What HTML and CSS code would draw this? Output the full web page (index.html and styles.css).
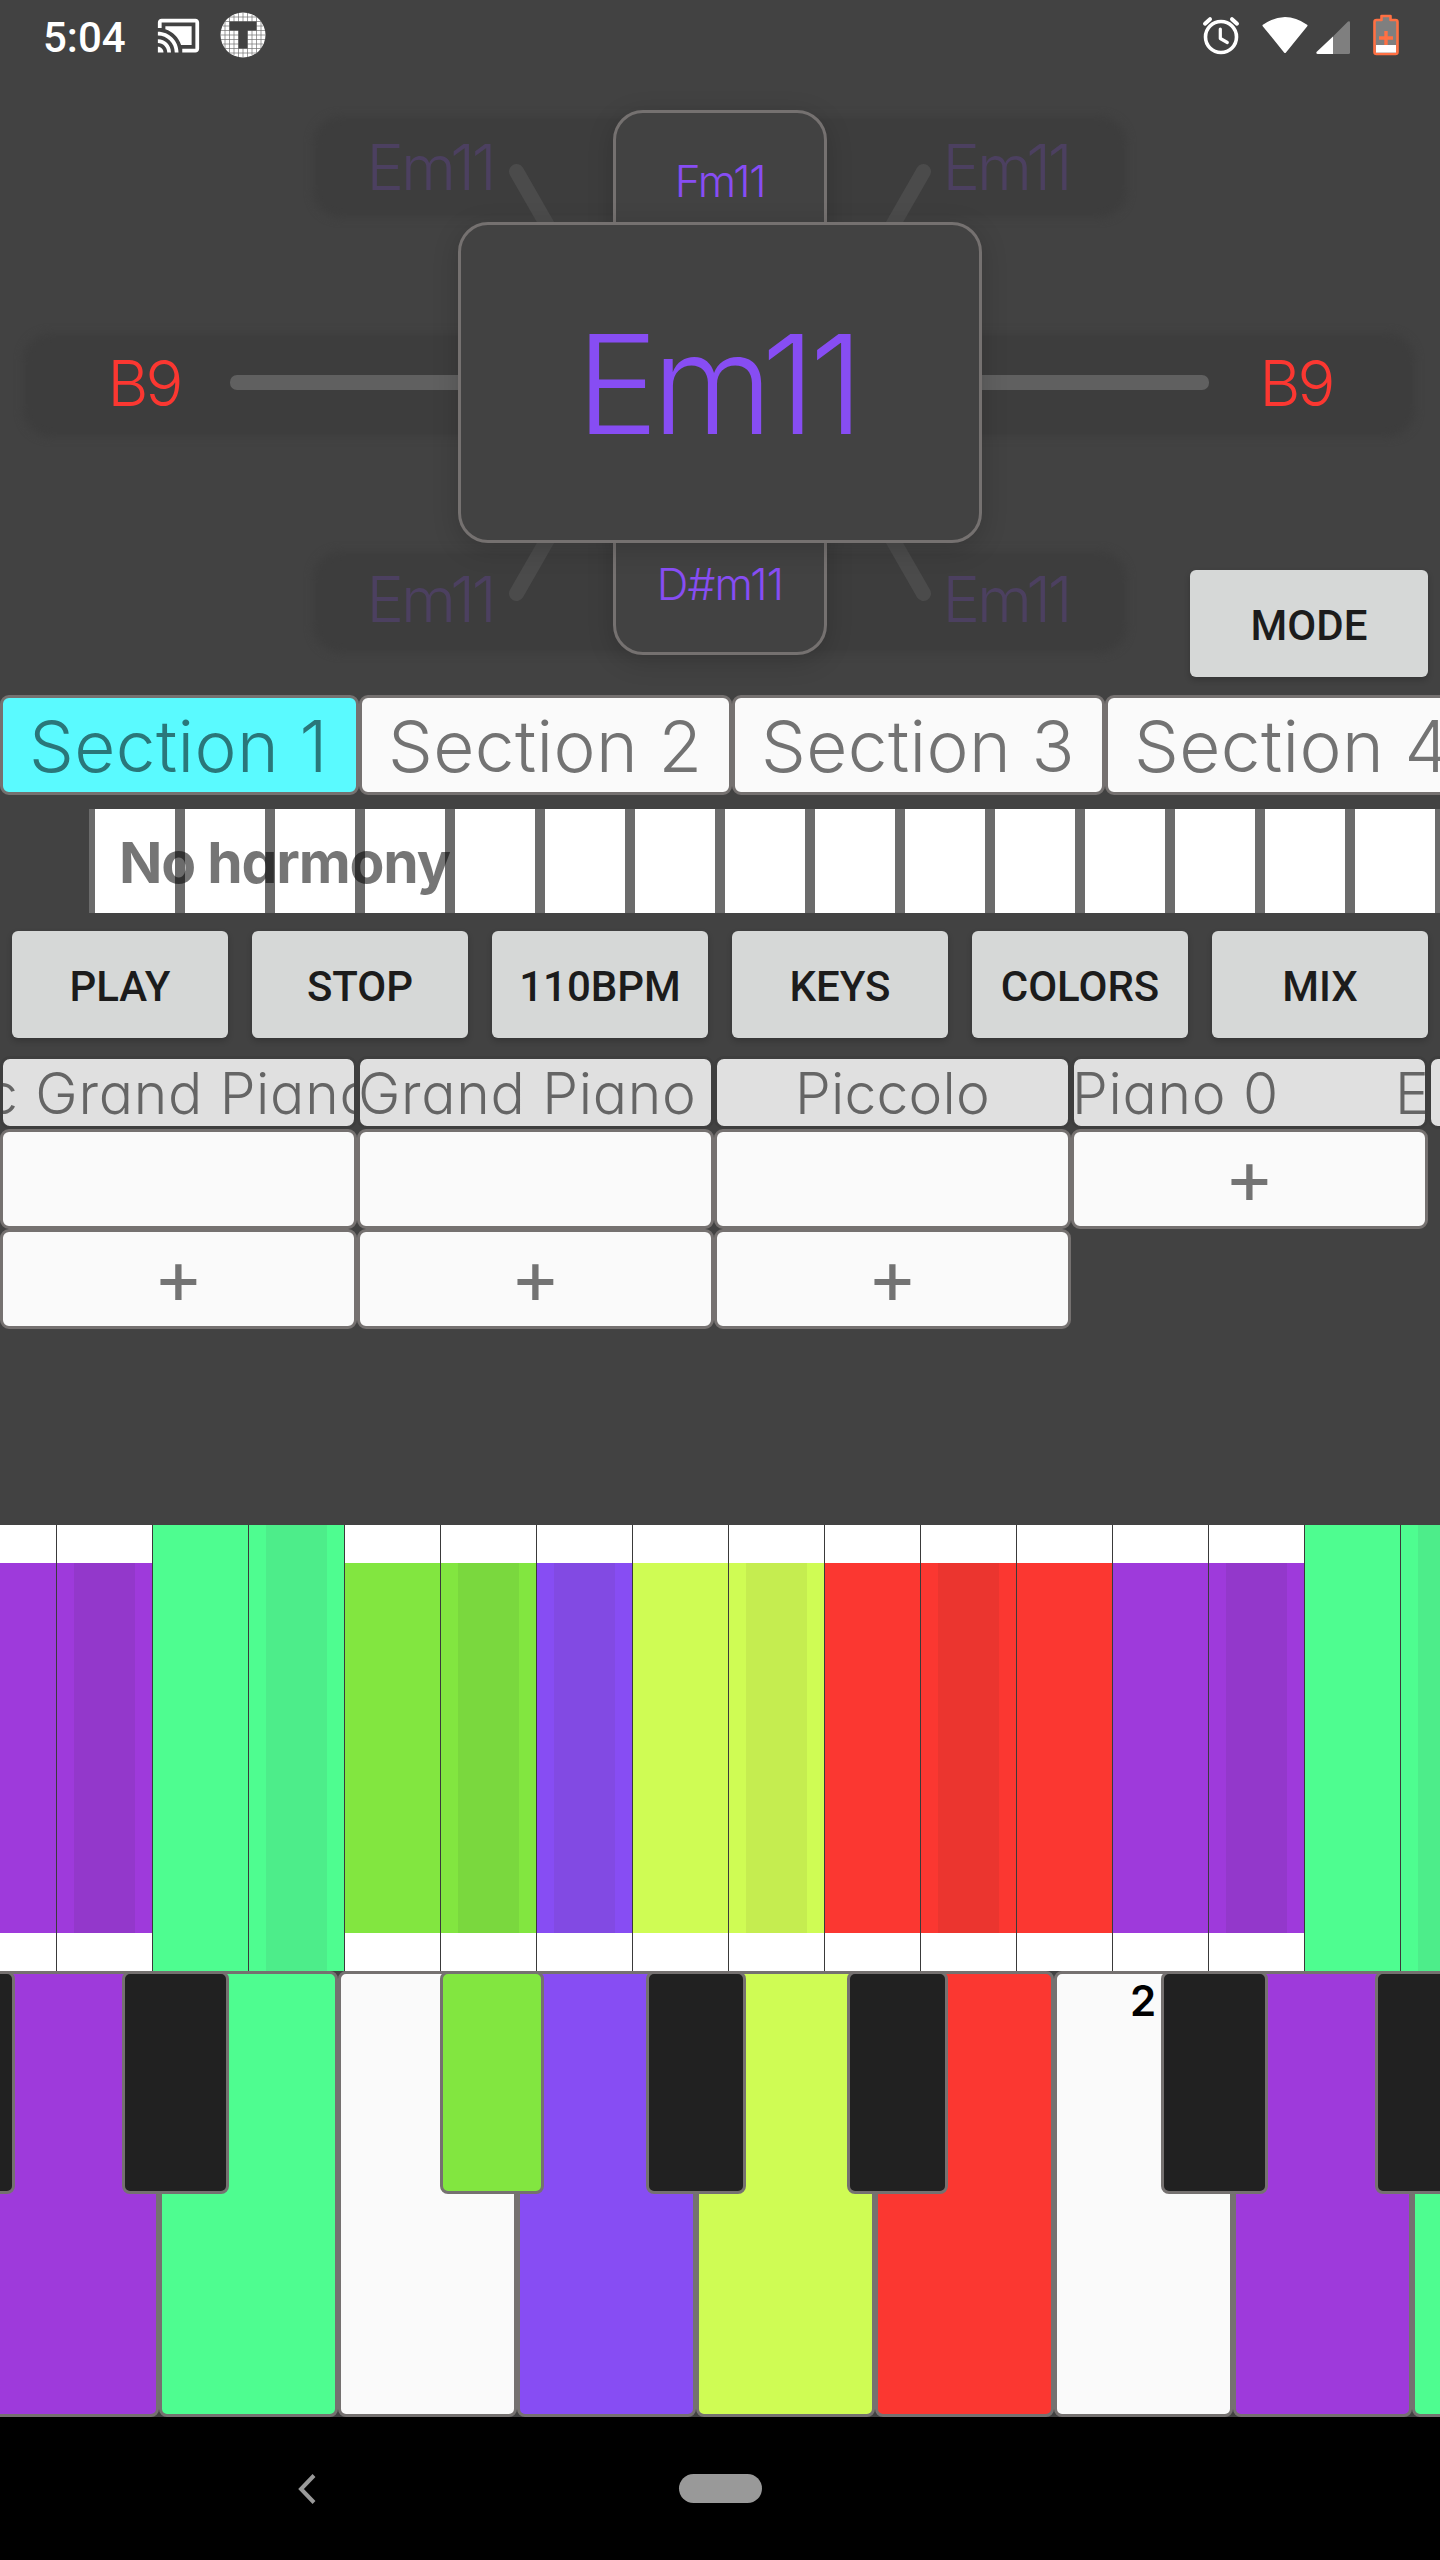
FILE: index.html
```html
<!DOCTYPE html>
<html lang="en">
<head>
<meta charset="utf-8">
<title>Harmony keyboard</title>
<link rel="stylesheet" href="styles.css">
</head>
<body>
<div class="app">
  <header class="status">
    <span class="clock">5:04</span>
    <svg class="ic-cast" width="45" height="45" viewBox="0 0 24 24"><path fill="#fff" d="M1 18v3h3c0-1.660-1.340-3-3-3zm0-4v2c2.760 0 5 2.240 5 5h2c0-3.870-3.130-7-7-7zm18-7H5v1.630c3.960 1.280 7.090 4.410 8.370 8.370H19V7zM1 10v2c4.970 0 9 4.030 9 9h2c0-6.080-4.930-11-11-11zm20-7H3c-1.100 0-2 .9-2 2v3h2V5h18v14h-7v2h7c1.100 0 2-.9 2-2V5c0-1.100-.9-2-2-2z"/></svg>
    <svg class="ic-t" width="46" height="46" viewBox="0 0 46 46">
      <circle cx="23" cy="23" r="22.500" fill="#fff"/>
      <path stroke="#424242" stroke-width=".7" opacity=".75" d="M5 10v26M9.500 5v36M14 3v40M18.500 1v44M23 .5v45M27.500 1v44M32 3v40M36.500 5v36M41 10v26M10 5h26M5 9.500h36M3 14h40M1 18.500h44M.5 23h45M1 27.500h44M3 32h40M5 36.500h36M10 41h26"/>
      <path fill="#424242" d="M9.500 9.500h27v9h-9v18h-9v-18h-9z"/>
    </svg>
    <span class="grow"></span>
    <svg class="ic-alarm" width="40" height="40" viewBox="0 0 40 40" fill="none" stroke="#fff" stroke-linecap="round">
      <circle cx="20" cy="22" r="15.500" stroke-width="3.600"/>
      <path stroke-width="3.200" stroke-linejoin="round" d="M19.300 14v9.500l7 4"/>
      <path stroke-width="4" d="M4 8.700l5-4.500M31 4.200l5 4.500"/>
    </svg>
    <svg class="ic-wifi" width="46" height="38" viewBox="0 0 46 38"><path fill="#fff" stroke="#fff" stroke-width="2" stroke-linejoin="round" d="M1.500 9.500Q23-5.500 44.500 9.500L23 36z"/></svg>
    <svg class="ic-signal" width="36" height="36" viewBox="0 0 36 36"><path fill="#7f7f7f" d="M18 17.500L33 2.500q2-1 2 1V33.500q0 1.500-1.500 1.500H18z"/><path fill="#fff" d="M18 17.500V35H2.500q-2-.5-1-2z"/></svg>
    <svg class="ic-battery" width="26" height="42" viewBox="0 0 26 42"><path fill="#7f7f7f" stroke="#ff7043" stroke-width="2.600" stroke-linejoin="round" d="M8.500 2h9v4h5q2 0 2 2v30q0 2-2 2h-19q-2 0-2-2V8q0-2 2-2h5z"/><path fill="#fff" d="M3 31h20v7.600H3z"/><path stroke="#ff7043" stroke-width="3.400" d="M13 17v14M6 24h14"/></svg>
  </header>

  <section class="stage">
    <div class="band band-top"></div>
    <div class="band band-mid"></div>
    <div class="band band-bottom"></div>
    <svg class="rays" width="1440" height="623" viewBox="0 72 1440 623">
      <g stroke="#4b4b4b" stroke-width="15" stroke-linecap="round"><path d="M516.500 171.500l43 75M923.500 171.500l-43 75M516.500 593.500l43-75M923.500 593.500l-43-75"/></g>
      <rect x="230" y="375" width="979" height="15" rx="7" fill="#606060"/>
    </svg>
    <div class="step-card"></div>
    <div class="main-card"></div>
    <span class="chord huge">Em11</span>
    <span class="chord small up">Fm11</span>
    <span class="chord small down">D#m11</span>
    <span class="chord side red left">B9</span>
    <span class="chord side red right">B9</span>
    <span class="chord side dim tl">Em11</span>
    <span class="chord side dim tr">Em11</span>
    <span class="chord side dim bl">Em11</span>
    <span class="chord side dim br">Em11</span>
    <button class="btn mode">MODE</button>
  </section>

  <nav class="sections">
    <div class="section active">Section 1</div>
    <div class="section">Section 2</div>
    <div class="section">Section 3</div>
    <div class="section">Section 4</div>
  </nav>

  <div class="harmony">
    <i></i><i></i><i></i><i></i><i></i><i></i><i></i><i></i><i></i><i></i><i></i><i></i><i></i><i></i><i></i>
    <span class="harmony-label">No harmony</span>
  </div>

  <div class="controls">
    <button class="btn">PLAY</button>
    <button class="btn">STOP</button>
    <button class="btn">110BPM</button>
    <button class="btn">KEYS</button>
    <button class="btn">COLORS</button>
    <button class="btn">MIX</button>
  </div>

  <div class="parts">
    <div class="part"><div class="part-name"><span class="scrolled">c Grand Piano</span></div><div class="cell"></div><div class="cell plus">+</div></div>
    <div class="part"><div class="part-name"><span class="flush">Grand Piano</span></div><div class="cell"></div><div class="cell plus">+</div></div>
    <div class="part"><div class="part-name centered"><span>Piccolo</span></div><div class="cell"></div><div class="cell plus">+</div></div>
    <div class="part"><div class="part-name marquee"><span>Piano 0</span><span>E</span></div><div class="cell plus">+</div></div>
    <div class="part"><div class="part-name"></div></div>
  </div>

  <div class="colors">
    <div class="tone purple"></div><div class="tone purple dark"></div>
    <div class="tone green root"></div><div class="tone green root dark"></div>
    <div class="tone leaf"></div><div class="tone leaf dark"></div>
    <div class="tone violet dark"></div>
    <div class="tone lime"></div><div class="tone lime dark"></div>
    <div class="tone red"></div><div class="tone red dark"></div><div class="tone red"></div>
    <div class="tone purple"></div><div class="tone purple dark"></div>
    <div class="tone green root"></div><div class="tone green root dark"></div>
  </div>

  <div class="keyboard">
    <div class="key purple"></div><div class="key green"></div><div class="key"></div><div class="key violet"></div><div class="key lime"></div><div class="key red"></div><div class="key"><span class="octave">2</span></div><div class="key purple"></div><div class="key green"></div>
    <div class="sharp s1"></div><div class="sharp s2"></div><div class="sharp s3 leaf"></div><div class="sharp s4"></div><div class="sharp s5"></div><div class="sharp s6"></div><div class="sharp s7"></div>
  </div>

  <footer class="sysnav">
    <svg width="20" height="32" viewBox="0 0 20 32"><path fill="none" stroke="#999" stroke-width="4" d="M17 2.500L4 16l13 13.500"/></svg>
    <span class="pill"></span>
  </footer>
</div>
</body>
</html>
```
FILE: styles.css
```css
* { box-sizing: border-box; }
body {
  margin: 0;
  background: #424242;
  font-family: Inter, "Open Sans", sans-serif;
  font-feature-settings: "cv11";
}
.app {
  width: 1440px;
  height: 2560px;
  display: flex;
  flex-direction: column;
  overflow: hidden;
}
.app > * { flex: none; }

.purple { --tone: #9e3adb; --deep: #9338cb; }
.green { --tone: #4efd90; --deep: #4ded8a; }
.leaf { --tone: #82e640; --deep: #7ad83e; }
.violet { --tone: #874df3; --deep: #824ae3; }
.lime { --tone: #cffc54; --deep: #c5ed50; }
.red { --tone: #fb3731; --deep: #eb352f; }

/* status bar */
.status { height: 72px; padding: 0 41px 0 43px; display: flex; align-items: flex-start; }
.clock { font: 500 42px/42px Roboto, sans-serif; color: #fff; margin-top: 17px; }
.ic-cast { margin: 13px 0 0 30px; }
.ic-t { margin: 12px 0 0 19px; }
.grow { flex: 1; }
.ic-alarm { margin-top: 15px; }
.ic-wifi { margin: 16px 0 0 21px; }
.ic-signal { margin: 19px 0 0 7px; }
.ic-battery { margin: 14px 0 0 22px; }

/* chord canvas */
.stage { position: relative; height: 623px; }
.rays { position: absolute; left: 0; top: 0; }
.band { position: absolute; background: #3d3d3d; border-radius: 28px; filter: blur(4px); left: 313px; width: 814px; height: 102px; }
.band-top { top: 44px; }
.band-mid { left: 23px; width: 1392px; top: 261px; height: 104px; }
.band-bottom { top: 479px; }
.step-card, .main-card {
  position: absolute;
  border: 3px solid #757170;
  border-radius: 30px;
  background: #424242;
  box-shadow: 0 6px 26px rgba(0, 0, 0, .17);
}
.step-card { left: 613px; top: 38px; width: 214px; height: 545px; }
.main-card { left: 458px; top: 150px; width: 524px; height: 321px; }
.chord { position: absolute; transform: translate(-50%, -50%); font-weight: 360; line-height: 1; white-space: nowrap; color: #874df3; }
.huge { left: 717px; top: 312px; font-size: 138px; letter-spacing: -6px; }
.small { font-size: 44px; left: 720px; letter-spacing: -1.3px; }
.up { top: 109px; }
.down { top: 512px; letter-spacing: -.9px; }
.side { font-size: 63px; letter-spacing: -3.2px; }
.side.red { color: #fb3731; top: 311px; letter-spacing: -3px; }
.left { left: 144px; }
.right { left: 1296px; }
.dim { color: #4c4060; }
.tl, .bl { left: 430px; }
.tr, .br { left: 1006px; }
.tl, .tr { top: 95px; }
.bl, .br { top: 527px; }

.btn {
  flex: 1;
  height: 107px;
  padding: 3px 0 0;
  border: 0;
  border-radius: 6px;
  background: #d6d8d7;
  color: #1c1c1c;
  font: 500 42px Roboto, sans-serif;
  box-shadow: 0 3px 6px rgba(0, 0, 0, .2);
}
.mode { position: absolute; left: 1190px; top: 498px; width: 238px; }

/* sections */
.sections { display: flex; height: 100px; overflow: hidden; }
.section {
  flex: none;
  width: 373px;
  border: 3px solid #757170;
  border-radius: 9px;
  background: #fafafa;
  color: #737373;
  font-size: 71px;
  font-weight: 355;
  line-height: 97px;
  letter-spacing: .4px;
  padding-left: 26px;
  white-space: nowrap;
}
.section.active { width: 359px; background: #5afaff; color: #2a777a; }

/* harmony strip */
.harmony { position: relative; display: flex; gap: 10px; height: 104px; margin: 14px 0 0 89px; padding-left: 6px; background: #6b6b6b; overflow: hidden; }
.harmony i { flex: none; width: 80px; background: #fff; }
.harmony-label { position: absolute; left: 30px; top: 1px; font-size: 57px; font-weight: 660; line-height: 106px; letter-spacing: -1.2px; color: rgba(0, 0, 0, .54); white-space: nowrap; }

.controls { display: flex; gap: 24px; margin-top: 18px; padding: 0 12px; }

/* instrument parts */
.parts { display: flex; height: 469px; margin-top: 18px; overflow: hidden; }
.part { flex: none; width: 357px; }
.part-name {
  height: 73px;
  border: 3px solid #3e3e3e;
  border-radius: 10px;
  background: #e0e0e0;
  color: #656565;
  font-size: 57px;
  font-weight: 355;
  line-height: 70px;
  letter-spacing: .7px;
  white-space: nowrap;
  overflow: hidden;
}
.scrolled { margin-left: -17px; }
.flush { margin-left: -2px; }
.centered { text-align: center; letter-spacing: .2px; }
.marquee { display: flex; gap: 118px; margin-left: 0; text-indent: -2px; }
.cell { height: 100px; border: 3px solid #757170; border-radius: 9px; background: #fafafa; }
.plus { text-align: center; font-size: 76px; line-height: 88px; font-weight: 400; color: #737373; }

/* colour strip */
.colors { display: flex; height: 446px; margin-left: -40px; background: #fff; }
.tone { flex: none; width: 96px; border-left: 1px solid #3a3a3a; padding: 38px 0; background: var(--tone) content-box; }
.tone.root { padding: 0; }
.tone.dark { background: linear-gradient(90deg, var(--tone) 17px, var(--deep) 17px 78px, var(--tone) 78px) content-box; }

/* piano */
.keyboard { position: relative; display: flex; height: 446px; margin-left: -20px; }
.key { flex: none; width: 179px; border: 3px solid #757170; border-radius: 8px; background: var(--tone, #fafafa); }
.octave { display: block; margin: 6px 0 0 73px; font-size: 42px; font-weight: 580; line-height: 42px; }
.sharp { position: absolute; top: 0; height: 223px; width: 107px; border: 3px solid #757170; border-radius: 8px; background: var(--tone, #212121); }
.s1 { left: -72px; }
.s2 { left: 142px; }
.s3 { left: 460px; width: 104px; }
.s4 { left: 666px; width: 100px; }
.s5 { left: 867px; width: 101px; }
.s6 { left: 1181px; }
.s7 { left: 1395px; }

/* system navigation */
.sysnav { height: 143px; background: #000; display: flex; align-items: center; padding-left: 297px; }
.pill { width: 83px; height: 29px; margin-left: 362px; border-radius: 15px; background: #999; }
```
